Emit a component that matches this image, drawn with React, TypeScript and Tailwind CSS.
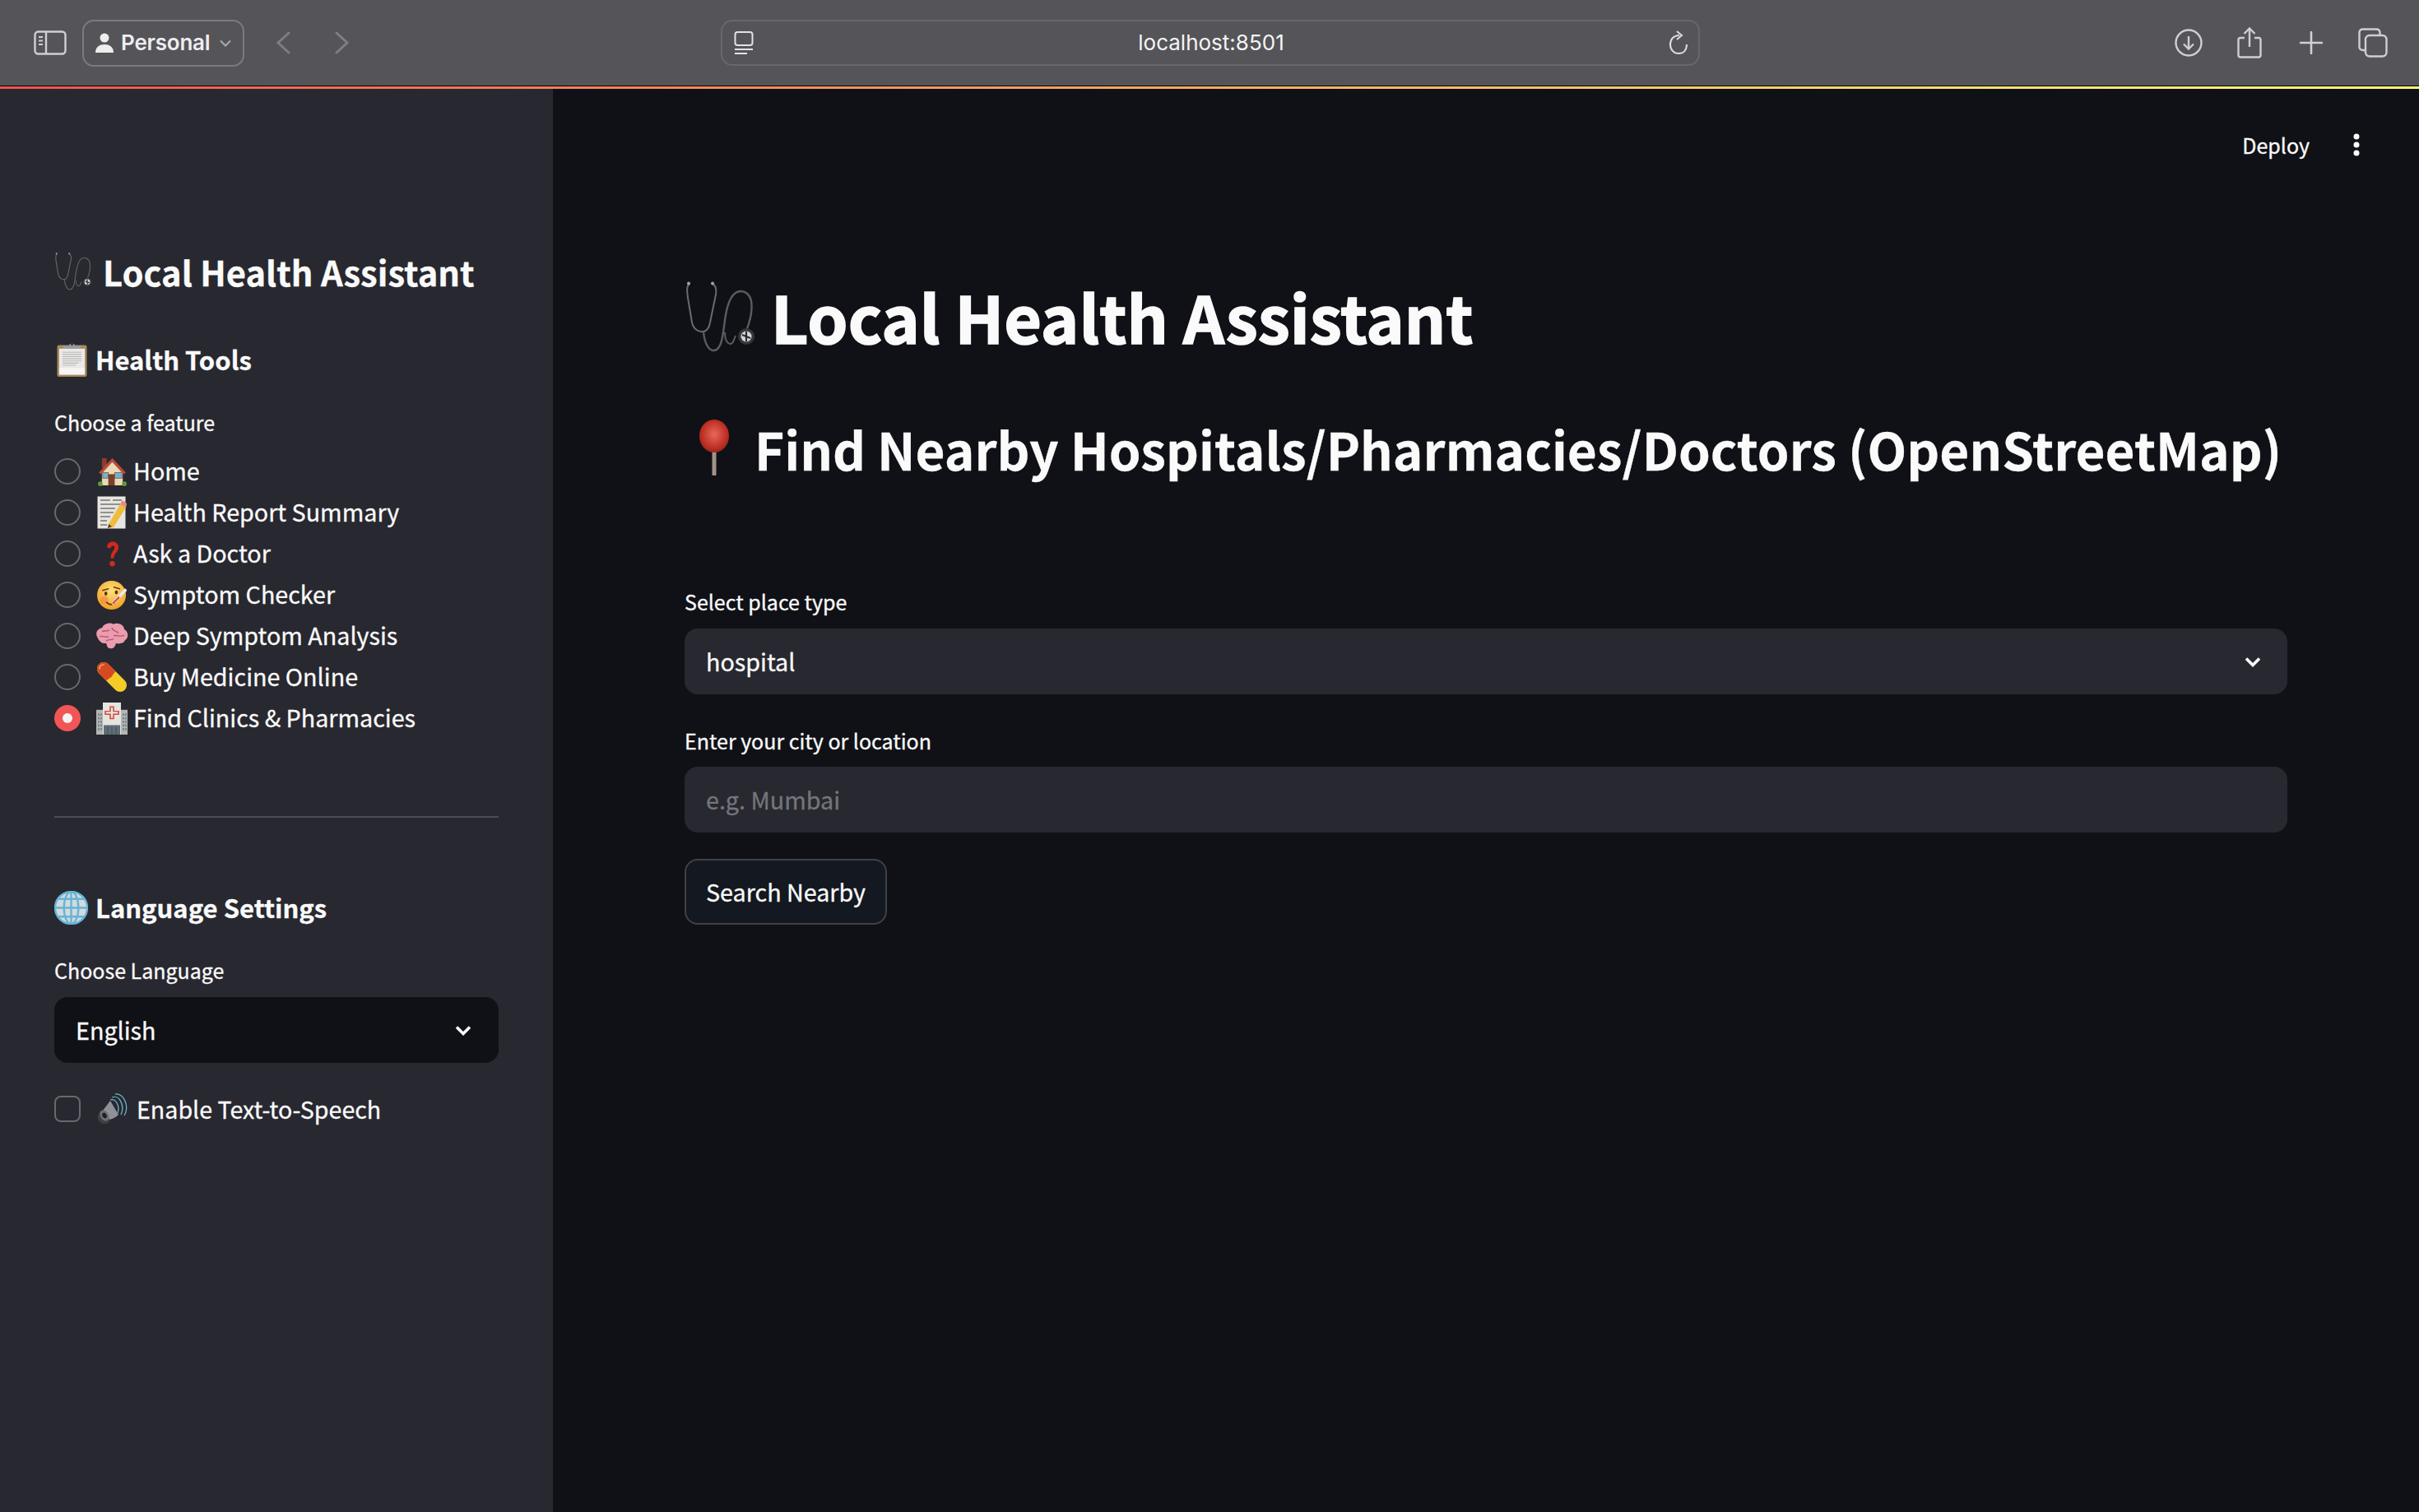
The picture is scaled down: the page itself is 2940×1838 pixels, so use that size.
import type { ReactNode } from 'react';

type IconProps = { className?: string };

const Stethoscope = ({ className }: IconProps) => (
  <svg viewBox="0 0 88 86" className={className} fill="none">
    <path d="M6 3C2 6 3 12 4 20L9 50C11 59 18 62 23 61C28 60 30 56 31 50L38 16C39 10 38 5 34 3" stroke="#6a6a6e" strokeWidth="2" />
    <path d="M23 61C24 74 29 85 36 84C44 83 46 70 48 55C50 38 53 20 62 14C70 9 79 14 81 24C83 36 79 50 75 60" stroke="#5c5c60" strokeWidth="2.4" />
    <path d="M62 66C60 72 58 77 55 76C51 75 49 70 49 62" stroke="#5c5c60" strokeWidth="2" />
    <circle cx="5" cy="2.5" r="2" fill="#a5a5a8" />
    <circle cx="34" cy="2.5" r="2" fill="#a5a5a8" />
    <circle cx="75" cy="67" r="10" fill="#36363a" />
    <circle cx="75" cy="67" r="6.5" fill="#d5d5d8" />
    <path d="M70 65L80 69M75 61V73" stroke="#2a2a2e" strokeWidth="2.2" />
  </svg>
);

const Clipboard = ({ className }: IconProps) => (
  <svg viewBox="0 0 38 48" className={className} preserveAspectRatio="none">
    <rect x="0.5" y="4" width="37" height="44" rx="2.5" fill="#a88a5c" />
    <rect x="3" y="9" width="32" height="36" fill="#e9e9e7" />
    <rect x="3" y="36" width="32" height="9" fill="#f6f6f5" />
    <path d="M7 14H31M7 17H31M7 20H31M7 23H31M7 26H31M7 29H27M7 32H24" stroke="#b9b9b9" strokeWidth="1.2" />
    <path d="M8 9V5H15C15 1 23 1 23 5H30V9Z" fill="#9a9ca0" />
    <circle cx="19" cy="3.5" r="1.4" fill="#30313a" />
  </svg>
);

const House = ({ className }: IconProps) => (
  <svg viewBox="0 0 38 38" className={className}>
    <rect x="6" y="2" width="6" height="12" fill="#8c3b2f" />
    <path d="M6 18L19 5L32 18V36H6Z" fill="#ead9b4" />
    <path d="M2 20L19 2L36 20L33 22L19 7L5 22Z" fill="#b94a3a" />
    <rect x="7" y="20" width="7" height="7" fill="#6fb1dc" stroke="#8b6b4a" strokeWidth="1" />
    <rect x="22" y="20" width="9" height="7" fill="#6fb1dc" stroke="#8b6b4a" strokeWidth="1" />
    <rect x="14" y="22" width="8" height="14" fill="#7b4027" />
    <circle cx="4" cy="34" r="3" fill="#5d9b3a" />
    <circle cx="34" cy="34" r="3" fill="#5d9b3a" />
  </svg>
);

const Memo = ({ className }: IconProps) => (
  <svg viewBox="0 0 36 40" className={className}>
    <rect x="0.5" y="0.5" width="34" height="39" fill="#e6e5e2" />
    <path d="M4 5H16M19 5H30M4 10H28M4 15H22M4 20H20M4 25H16M4 30H12M4 35H12" stroke="#77756f" strokeWidth="1.3" />
    <path d="M14 34L28 10L35 14L20 38L13 39Z" fill="#f0bc3a" />
    <path d="M28 10L30 6C31 5 36 8 36 10L35 14Z" fill="#e58a85" />
    <path d="M13 39L14 34L18 37Z" fill="#4a4037" />
  </svg>
);

const Question = ({ className }: IconProps) => (
  <svg viewBox="0 0 20 34" className={className}>
    <path d="M3 9C3 -1 18 -1 18 9C18 15 12 16 12 23H8C8 14 13 13 13 9C13 6 8 6 8 10Z" fill="#d2291c" />
    <circle cx="10" cy="30" r="3.4" fill="#d2291c" />
  </svg>
);

const FaceThermometer = ({ className }: IconProps) => (
  <svg viewBox="0 0 38 38" className={className}>
    <defs>
      <radialGradient id="faceFill" cx="50%" cy="35%" r="70%">
        <stop offset="0%" stopColor="#fde27a" />
        <stop offset="100%" stopColor="#f39a1f" />
      </radialGradient>
    </defs>
    <circle cx="18" cy="19" r="18" fill="url(#faceFill)" />
    <circle cx="9" cy="25" r="5" fill="#f3824f" opacity="0.6" />
    <path d="M7 13L14 11M21 9L28 11" stroke="#5b3a14" strokeWidth="1.6" strokeLinecap="round" />
    <ellipse cx="11" cy="17" rx="1.8" ry="2.4" fill="#4a2f10" />
    <ellipse cx="24" cy="15.5" rx="1.8" ry="2.4" fill="#4a2f10" />
    <path d="M12 28C15 31 19 31 22 29" stroke="#5b3a14" strokeWidth="1.8" fill="none" strokeLinecap="round" />
    <path d="M20 29L35 13" stroke="#e8e8ea" strokeWidth="4" strokeLinecap="round" />
    <path d="M20 29L27 22" stroke="#df4b3e" strokeWidth="2.4" strokeLinecap="round" />
  </svg>
);

const Brain = ({ className }: IconProps) => (
  <svg viewBox="0 0 40 38" className={className} preserveAspectRatio="none">
    <path d="M3 22C-1 16 2 9 8 8C10 3 17 0 22 3C28 0 35 5 35 10C40 13 41 21 36 25C34 30 28 30 25 29C24 33 22 37 18 36C14 36 14 31 13 29C9 30 5 27 3 22Z" fill="#eb9cae" />
    <path d="M8 13C11 11 14 14 17 11M5 20C9 18 12 22 16 20M20 8C21 13 25 12 28 15M22 19C26 17 30 21 35 18M13 26C15 23 20 25 22 23" stroke="#b5566f" strokeWidth="1.5" fill="none" />
  </svg>
);

const Pill = ({ className }: IconProps) => (
  <svg viewBox="0 0 38 38" className={className} fill="none">
    <path d="M9 9L29 29" stroke="#f4cc28" strokeWidth="16" strokeLinecap="round" />
    <path d="M9 9L13 13" stroke="#d64a22" strokeWidth="16" strokeLinecap="round" />
    <path d="M9 9L18 18" stroke="#d64a22" strokeWidth="16" />
    <path d="M4 9C4 6 6 4 9 4" stroke="#f3a07f" strokeWidth="1.600" strokeLinecap="round" />
  </svg>
);

const Hospital = ({ className }: IconProps) => (
  <svg viewBox="0 0 38 44" className={className} preserveAspectRatio="none">
    <rect x="0" y="10" width="38" height="34" fill="#b6b5b0" />
    <rect x="8" y="0" width="22" height="44" fill="#e6e4de" />
    <rect x="9" y="31" width="20" height="13" fill="#5f6e78" />
    <path d="M17 6H21V12H27V16H21V22H17V16H11V12H17Z" fill="none" stroke="#d24b42" strokeWidth="1.6" />
    <path d="M3 15V38M6 15V38M33 15V38M36 15V38" stroke="#5b7f95" strokeWidth="1.6" strokeDasharray="3 2" />
    <path d="M14 33V44M19 33V44M24 33V44" stroke="#3f4c55" strokeWidth="1" />
  </svg>
);

const Globe = ({ className }: IconProps) => (
  <svg viewBox="0 0 42 42" className={className} fill="none">
    <circle cx="21" cy="21" r="20" fill="#d3dadd" />
    <g stroke="#66b4d6" strokeWidth="2.4">
      <circle cx="21" cy="21" r="20" />
      <ellipse cx="21" cy="21" rx="9" ry="20" />
      <path d="M21 1V41M1 21H41M4 10H38M4 32H38" />
    </g>
  </svg>
);

const Speaker = ({ className }: IconProps) => (
  <svg viewBox="0 0 40 40" className={className} fill="none">
    <path d="M18 6C27 2 34 16 29 27" stroke="#6bb4c7" strokeWidth="1.3" />
    <path d="M22 2C32 1 40 16 33 28" stroke="#6bb4c7" strokeWidth="1.3" />
    <path d="M16 9C23 7 28 17 25 25" stroke="#6bb4c7" strokeWidth="1.3" />
    <path d="M16 10L26 27C22 31 17 33 13 33L7 22Z" fill="#8e9197" />
    <path d="M6 21C2 24 -1 30 2 34C5 40 14 39 16 34Z" fill="#3e4045" />
    <ellipse cx="9" cy="28" rx="5" ry="7" transform="rotate(-30 9 28)" fill="#6d7076" />
    <ellipse cx="9" cy="28" rx="2.5" ry="3.6" transform="rotate(-30 9 28)" fill="#1f2024" />
  </svg>
);

const Pin = ({ className }: IconProps) => (
  <svg viewBox="0 0 36 68" className={className}>
    <defs>
      <radialGradient id="pinFill" cx="50%" cy="45%" r="60%">
        <stop offset="0%" stopColor="#e8695a" />
        <stop offset="70%" stopColor="#bd2f23" />
        <stop offset="100%" stopColor="#8f2018" />
      </radialGradient>
    </defs>
    <rect x="15.5" y="36" width="5" height="32" rx="1" fill="#a39488" />
    <ellipse cx="18" cy="20" rx="18" ry="20" fill="url(#pinFill)" />
  </svg>
);

const Chevron = ({ className }: IconProps) => (
  <svg viewBox="0 0 20 13" className={className} fill="none">
    <path d="M2 2.5L10 10.5L18 2.5" stroke="#fafafa" strokeWidth="3.6" />
  </svg>
);

const Radio = ({ selected }: { selected?: boolean }) =>
  selected ? (
    <span className="flex h-8 w-8 items-center justify-center rounded-full bg-[#f25555]">
      <span className="h-3 w-3 rounded-full bg-[#f3f3f3]" />
    </span>
  ) : (
    <span className="h-8 w-8 rounded-full border-2 border-[#68686e]" />
  );

const RadioRow = ({ icon, label, selected }: { icon: ReactNode; label: string; selected?: boolean }) => (
  <div className="flex h-[50px] items-center text-[28.7px] text-[#fafafa]">
    <Radio selected={selected} />
    <span className="ml-[18px] flex w-[40px] justify-center">{icon}</span>
    <span className="mb-[2px] ml-[6px] leading-[48px]">{label}</span>
  </div>
);

const BrowserBar = () => (
  <header className="flex h-[104px] shrink-0 items-center bg-[#555459] font-['Inter','Liberation_Sans',sans-serif]">
    <svg viewBox="0 0 40 30" className="ml-[41px] h-[30px] w-[40px]" fill="none">
      <rect x="1.5" y="1.5" width="37" height="27" rx="4" stroke="#d0d0d2" strokeWidth="2.4" />
      <path d="M15 2V28" stroke="#d0d0d2" strokeWidth="2.4" />
      <path d="M6 8H11M6 12.500H11M6 17H11" stroke="#d0d0d2" strokeWidth="2" />
    </svg>
    <div className="ml-[19px] flex h-[57px] w-[197px] items-center rounded-[14px] border-2 border-[#7b7a7e]">
      <svg viewBox="0 0 22 24" className="ml-[14px] h-[24px] w-[22px]" fill="#ededee">
        <circle cx="11" cy="6" r="5.500" />
        <path d="M0 24C0 17 5 14 11 14C17 14 22 17 22 24Z" />
      </svg>
      <span className="ml-[9px] text-[26px] font-semibold leading-none tracking-[-0.2px] text-[#ededee]">Personal</span>
      <svg viewBox="0 0 14 9" className="ml-[12px] h-[9px] w-[14px]" fill="none">
        <path d="M1 1.500L7 7.500L13 1.500" stroke="#a6a5a8" strokeWidth="2.200" />
      </svg>
    </div>
    <svg viewBox="0 0 18 28" className="ml-[38px] h-[28px] w-[18px]" fill="none">
      <path d="M16 2L3 14L16 26" stroke="#7f7e83" strokeWidth="3" strokeLinecap="round" />
    </svg>
    <svg viewBox="0 0 18 28" className="ml-[54px] h-[28px] w-[18px]" fill="none">
      <path d="M2 2L15 14L2 26" stroke="#7f7e83" strokeWidth="3" strokeLinecap="round" />
    </svg>
    <div className="ml-[451px] flex h-[56px] w-[1190px] items-center rounded-[14px] border-2 border-[#68676c] pl-[14px] pr-[12px]">
      <svg viewBox="0 0 24 28" className="h-[28px] w-[24px]" fill="none">
        <rect x="1.500" y="1" width="21" height="16" rx="3" stroke="#e2e2e3" strokeWidth="2" />
        <path d="M1 22H23" stroke="#e2e2e3" strokeWidth="2" />
        <path d="M1 27H16" stroke="#e2e2e3" strokeWidth="2" />
      </svg>
      <span className="flex-1 text-center text-[26px] leading-none text-[#f4f4f4]">localhost:8501</span>
      <svg viewBox="0 0 24 30" className="h-[30px] w-[24px]" fill="none">
        <path d="M13 6C6 6 2 11 2 17C2 24 7 28 12 28C18 28 22 24 22 17" stroke="#dddddf" strokeWidth="2" />
        <path d="M10 1L16 6L10 11" stroke="#dddddf" strokeWidth="2" />
      </svg>
    </div>
    <svg viewBox="0 0 34 34" className="ml-[577px] h-[34px] w-[34px]" fill="none">
      <circle cx="17" cy="17" r="15.500" stroke="#cfcfd1" strokeWidth="2.400" />
      <path d="M17 9V24M11 18.500L17 24.500L23 18.500" stroke="#cfcfd1" strokeWidth="2.400" />
    </svg>
    <svg viewBox="0 0 30 38" className="ml-[42px] h-[38px] w-[30px]" fill="none">
      <path d="M9 13H4C2.500 13 1.500 14 1.500 15.500V34C1.500 35.500 2.500 36.500 4 36.500H26C27.500 36.500 28.500 35.500 28.500 34V15.500C28.500 14 27.500 13 26 13H21" stroke="#cfcfd1" strokeWidth="2.400" />
      <path d="M15 24V2M8.500 8L15 1.500L21.500 8" stroke="#cfcfd1" strokeWidth="2.400" />
    </svg>
    <svg viewBox="0 0 28 28" className="ml-[46px] h-[28px] w-[28px]" fill="none">
      <path d="M14 1V27M1 14H27" stroke="#d0d0d2" strokeWidth="2.600" strokeLinecap="round" />
    </svg>
    <svg viewBox="0 0 36 36" className="ml-[43px] h-[36px] w-[36px]" fill="none">
      <path d="M8 27H6C3 27 1.500 25.500 1.500 23V6C1.500 3 3 1.500 6 1.500H22C25 1.500 26.500 3 26.500 6V8" stroke="#cfcfd1" strokeWidth="2.400" />
      <rect x="9" y="9" width="25.500" height="25.500" rx="5" stroke="#cfcfd1" strokeWidth="2.400" />
    </svg>
  </header>
);

const Sidebar = () => (
  <aside className="flex w-[672px] shrink-0 flex-col bg-[#282830] px-[66px] pt-[194px] text-[#fafafa] [-webkit-text-stroke:0.3px]">
    <div className="flex h-[56px] items-center">
      <Stethoscope className="h-[46px] w-[47px] shrink-0" />
      <h1 className="ml-[12px] whitespace-nowrap text-[41.7px] font-semibold leading-[56px]">Local Health Assistant</h1>
    </div>
    <div className="mt-[55px] flex h-[48px] items-center">
      <Clipboard className="ml-[3px] h-[42px] w-[37px] shrink-0" />
      <h3 className="ml-[10px] text-[31px] font-semibold leading-[48px]">Health Tools</h3>
    </div>
    <p className="mt-[34px] text-[25px] leading-[36px]">Choose a feature</p>
    <div className="mt-[17px] flex flex-col">
      <RadioRow icon={<House className="h-[37px] w-[37px]" />} label="Home" />
      <RadioRow icon={<Memo className="h-[40px] w-[36px]" />} label="Health Report Summary" />
      <RadioRow icon={<Question className="h-[32px] w-[19px]" />} label="Ask a Doctor" />
      <RadioRow icon={<FaceThermometer className="h-[37px] w-[37px]" />} label="Symptom Checker" />
      <RadioRow icon={<Brain className="h-[34px] w-[40px]" />} label="Deep Symptom Analysis" />
      <RadioRow icon={<Pill className="h-[38px] w-[38px]" />} label="Buy Medicine Online" />
      <RadioRow icon={<Hospital className="h-[39px] w-[38px]" />} label="Find Clinics & Pharmacies" selected />
    </div>
    <div className="mt-[94px] h-[2px] bg-[#4c4c54]" />
    <div className="mt-[85px] flex h-[48px] items-center">
      <Globe className="h-[41px] w-[41px] shrink-0" />
      <h3 className="ml-[9px] text-[31px] font-semibold leading-[48px]">Language Settings</h3>
    </div>
    <p className="mt-[34px] text-[25px] leading-[36px]">Choose Language</p>
    <div className="mt-[15px] flex h-[80px] items-center justify-between rounded-2xl bg-[#101117] pl-[26px] pr-[33px]">
      <span className="text-[28.7px] leading-[80px]">English</span>
      <Chevron className="h-[13px] w-[20px]" />
    </div>
    <div className="mt-[40px] flex h-[32px] items-center">
      <span className="h-8 w-8 rounded-lg border-2 border-[#68686e]" />
      <Speaker className="ml-[20px] h-[40px] w-[40px]" />
      <span className="ml-[8px] text-[28.600px] leading-[50px]">Enable Text-to-Speech</span>
    </div>
  </aside>
);

const Main = () => (
  <main className="relative min-w-0 flex-1 bg-[#101117] pl-[160px] pr-[160px] pt-[229px] text-[#fafafa] [-webkit-text-stroke:0.3px]">
    <div className="absolute right-[72px] top-[47px] flex items-center">
      <span className="text-[25px] leading-[42px]">Deploy</span>
      <svg viewBox="0 0 8 28" className="ml-[53px] h-[28px] w-[8px]" fill="#fafafa">
        <circle cx="4" cy="4" r="3.500" />
        <circle cx="4" cy="14" r="3.500" />
        <circle cx="4" cy="24" r="3.500" />
      </svg>
    </div>
    <div className="flex h-[96px] items-center">
      <Stethoscope className="h-[86px] w-[88px] shrink-0" />
      <h1 className="mb-[2px] ml-[17px] text-[78.800px] font-bold leading-[96px] [-webkit-text-stroke:1.5px]">Local Health Assistant</h1>
    </div>
    <div className="mt-[71px] flex h-[80px] items-center">
      <Pin className="ml-[18px] h-[68px] w-[36px] shrink-0" />
      <h2 className="ml-[31px] mt-[2px] whitespace-nowrap text-[62.100px] font-semibold leading-[80px]">
        Find Nearby Hospitals/Pharmacies/Doctors (OpenStreetMap)
      </h2>
    </div>
    <label className="mt-[129px] block text-[25px] leading-[36px]">Select place type</label>
    <div className="mt-[15px] flex h-[80px] items-center justify-between rounded-2xl bg-[#282830] pl-[26px] pr-[32px]">
      <span className="text-[28.7px] leading-[80px]">hospital</span>
      <Chevron className="h-[13px] w-[20px]" />
    </div>
    <label className="mt-[38px] block text-[25px] leading-[36px]">Enter your city or location</label>
    <div className="mt-[14px] flex h-[80px] items-center rounded-2xl bg-[#282830] pl-[26px]">
      <span className="text-[28.7px] leading-[80px] text-[#74757a]">e.g. Mumbai</span>
    </div>
    <button className="mt-[32px] flex h-[80px] w-[246px] items-center justify-center rounded-2xl border-2 border-[#3f4148] bg-[#141820] text-[28.7px] text-[#fafafa]">
      Search Nearby
    </button>
  </main>
);

export default function App() {
  return (
    <div className="flex h-[1838px] w-[2940px] flex-col overflow-hidden bg-black font-['Noto_Sans_CJK_SC','Liberation_Sans',sans-serif]">
      <BrowserBar />
      <div className="mt-px h-[3px] shrink-0 bg-gradient-to-r from-[#ef5350] to-[#fffd80]" />
      <div className="flex flex-1">
        <Sidebar />
        <Main />
      </div>
    </div>
  );
}
